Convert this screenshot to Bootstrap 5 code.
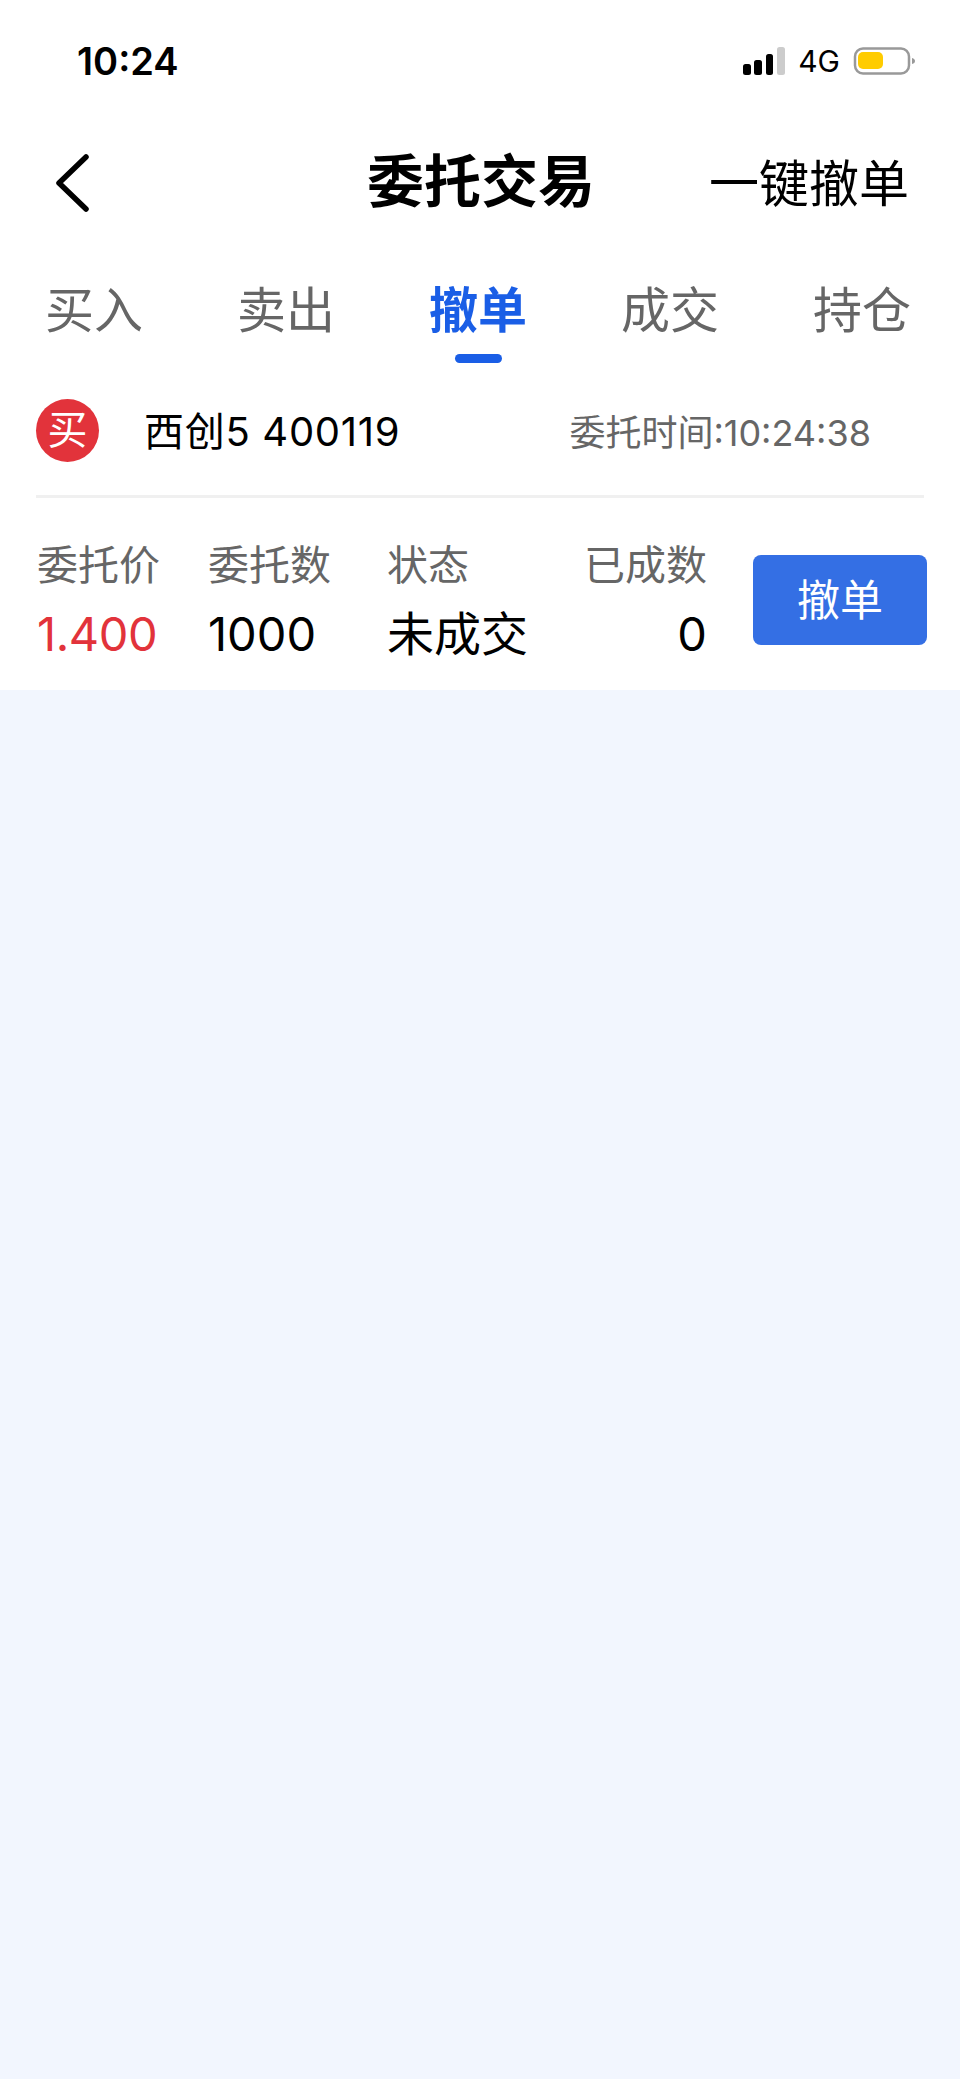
<!DOCTYPE html>
<html lang="zh">
<head>
  <meta charset="UTF-8">
  <title>委托交易</title>
  <link href="https://cdn.jsdelivr.net/npm/bootstrap@5.3.0/dist/css/bootstrap.min.css" rel="stylesheet">
  <style>
    body { background: #f2f6fe; font-family: Inter, "Noto Sans CJK SC", sans-serif; color: #000; }
    .top-area { background: #fff; height: 690px; }
    .status-bar { height: 119px; padding: 41px 45px 0 77px; }
    .clock { font-size: 38px; line-height: 40px; font-weight: 600; }
    .net-type { font-size: 30px; line-height: 40px; margin: 0 13px; }
    .title-bar { height: 126px; padding: 0 51px 0 55px; }
    .title-bar h1 { font-size: 57px; font-weight: 700; margin: 0; }
    .one-key { font-size: 50px; line-height: 60px; padding-top: 3px; }
    .title-side { width: 312px; }
    .tab-strip { height: 120px; padding-top: 36px; margin-left: -2px; }
    .tab-item { font-size: 49px; line-height: 60px; color: #666; width: 192px; flex: none; text-align: center; position: relative; }
    .tab-item.on { color: #1a5ee6; font-weight: 700; }
    .tab-item.on::after { content: ""; position: absolute; left: 73px; bottom: 2px; width: 47px; height: 9px; border-radius: 5px; background: #1a5ee6; }
    .order-head { height: 133px; margin: 0 36px; border-bottom: 3px solid #f0f0f0; }
    .side-dot { width: 63px; height: 63px; border-radius: 50%; background: #e2333b; color: #fff; font-size: 40px; line-height: 62px; text-align: center; }
    .stock-name { font-size: 40px; line-height: 50px; margin-left: 45px; padding-top: 3px; letter-spacing: .7px; }
    .order-time { font-size: 36px; line-height: 50px; color: #666; margin-left: auto; margin-right: 53px; padding-top: 5px; }
    .order-body { padding: 41px 33px 0 37px; }
    .cell-label { font-size: 41px; line-height: 50px; color: #666; padding-top: 1px; }
    .cell-value { font-size: 47px; line-height: 58px; margin-top: 15px; }
    .cell-value.up { color: #e2333b; letter-spacing: -.4px; }
    .col-price { width: 171px; }
    .col-count { width: 179px; }
    .col-state { width: 188px; }
    .col-done { width: 132px; text-align: right; }
    .cancel-btn { width: 174px; height: 90px; margin-left: auto; margin-bottom: 2px; background: #346fe4; border: 0; border-radius: 8px; color: #fff; font-size: 43px; padding: 0; }
  </style>
</head>
<body>
  <div class="top-area">
    <div class="status-bar d-flex justify-content-between align-items-start">
      <div class="clock">10:24</div>
      <div class="d-flex align-items-center">
        <svg width="42" height="28" viewBox="0 0 42 28">
          <rect x="0" y="17" width="8" height="11" rx="2.5" fill="#000"/>
          <rect x="11" y="13" width="8" height="15" rx="2.5" fill="#000"/>
          <rect x="23" y="7" width="7" height="21" rx="2.5" fill="#000"/>
          <rect x="34" y="0" width="8" height="28" rx="2.5" fill="#ccc"/>
        </svg>
        <span class="net-type">4G</span>
        <svg width="62" height="28" viewBox="0 0 62 28">
          <rect x="2" y="1.500" width="54" height="25" rx="8" fill="#fff" stroke="#999" stroke-width="2.500"/>
          <rect x="5" y="5" width="25" height="17" rx="5" fill="#fc0"/>
          <path d="M59 11c2 .5 3 1.500 3 3s-1 2.500-3 3z" fill="#999"/>
        </svg>
      </div>
    </div>
    <div class="title-bar d-flex align-items-center">
      <div class="title-side d-flex">
        <svg width="36" height="60" viewBox="0 0 36 60">
          <path d="M31 5 4 31l27 26" fill="none" stroke="#000" stroke-width="5.500" stroke-linecap="round" stroke-linejoin="round"/>
        </svg>
      </div>
      <h1>委托交易</h1>
      <div class="one-key ms-auto">一键撤单</div>
    </div>
    <div class="tab-strip d-flex">
      <div class="tab-item">买入</div>
      <div class="tab-item">卖出</div>
      <div class="tab-item on">撤单</div>
      <div class="tab-item">成交</div>
      <div class="tab-item">持仓</div>
    </div>
    <div class="order-head d-flex align-items-center">
      <div class="side-dot">买</div>
      <div class="stock-name">西创5 400119</div>
      <div class="order-time">委托时间:10:24:38</div>
    </div>
    <div class="order-body d-flex align-items-center">
      <div class="col-price">
        <div class="cell-label">委托价</div>
        <div class="cell-value up">1.400</div>
      </div>
      <div class="col-count">
        <div class="cell-label">委托数</div>
        <div class="cell-value">1000</div>
      </div>
      <div class="col-state">
        <div class="cell-label">状态</div>
        <div class="cell-value">未成交</div>
      </div>
      <div class="col-done">
        <div class="cell-label text-nowrap">已成数</div>
        <div class="cell-value">0</div>
      </div>
      <button class="btn cancel-btn" type="button">撤单</button>
    </div>
  </div>
  <script src="https://cdn.jsdelivr.net/npm/bootstrap@5.3.0/dist/js/bootstrap.bundle.min.js"></script>
</body>
</html>
